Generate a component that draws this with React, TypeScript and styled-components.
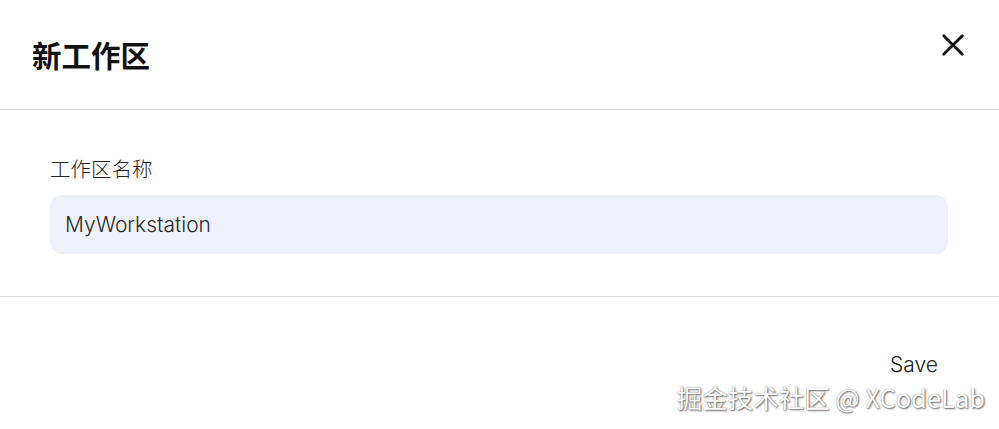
import React from 'react';
import styled, { createGlobalStyle } from 'styled-components';

const GlobalStyle = createGlobalStyle`
  html, body {
    margin: 0;
    padding: 0;
    background: #ffffff;
  }
  body {
    font-family: 'Inter', 'Noto Sans CJK SC', sans-serif;
    color: #1f1f1f;
  }
`;

const Dialog = styled.div`
  position: relative;
  width: 999px;
  height: 429px;
  background: #ffffff;
  overflow: hidden;
`;

const Header = styled.header`
  height: 110px;
  display: flex;
  align-items: center;
  justify-content: space-between;
  padding: 0 31px 0 32px;
  box-sizing: border-box;
  border-bottom: 1px solid #d9d9d9;
`;

const Title = styled.h2`
  margin: 0 0 2px;
  font-family: 'Noto Sans CJK SC', sans-serif;
  font-size: 29.5px;
  font-weight: 700;
  color: #111111;
`;

const CloseButton = styled.button`
  border: 0;
  background: none;
  padding: 0;
  margin-bottom: 19px;
  width: 30px;
  height: 30px;
  display: flex;
  align-items: center;
  justify-content: center;
  cursor: pointer;
`;

const Body = styled.div`
  height: 187px;
  padding: 43px 51px 0 50px;
  box-sizing: border-box;
  border-bottom: 1px solid #d9d9d9;
`;

const Label = styled.label`
  display: block;
  font-family: 'Noto Sans CJK SC', sans-serif;
  font-size: 20.5px;
  font-weight: 300;
  color: #222222;
  line-height: 30px;
  margin-bottom: 12px;
`;

const Input = styled.input`
  display: block;
  width: 100%;
  height: 59px;
  box-sizing: border-box;
  border: 0;
  outline: none;
  border-radius: 12px;
  background: #eef1f8;
  padding: 0 15px;
  font-family: 'Inter', sans-serif;
  font-size: 21px;
  font-weight: 300;
  color: #2a2a2a;
`;

const Footer = styled.div`
  display: flex;
  justify-content: flex-end;
  padding: 55px 61px 0 0;
`;

const SaveButton = styled.button`
  border: 0;
  background: none;
  padding: 0;
  font-family: 'Inter', sans-serif;
  font-size: 21px;
  font-weight: 300;
  color: #222222;
  cursor: pointer;
`;

const Watermark = styled.div`
  position: absolute;
  right: 14px;
  bottom: 14px;
  font-family: 'Noto Sans CJK SC', sans-serif;
  font-size: 25.5px;
  color: #ffffff;
  text-shadow: 1px 1px 2px rgba(0, 0, 0, 0.6), 0 0 1px rgba(0, 0, 0, 0.5);
  white-space: nowrap;
`;

export default function App() {
  return (
    <>
      <GlobalStyle />
      <Dialog>
        <Header>
          <Title>新工作区</Title>
          <CloseButton aria-label="close">
            <svg width="28" height="28" viewBox="0 0 24 24" fill="none" stroke="#111" strokeWidth="2.4" strokeLinecap="round">
              <path d="M4 4L20 20M20 4L4 20" />
            </svg>
          </CloseButton>
        </Header>
        <Body>
          <Label>工作区名称</Label>
          <Input defaultValue="MyWorkstation" />
        </Body>
        <Footer>
          <SaveButton>Save</SaveButton>
        </Footer>
        <Watermark>掘金技术社区 @ XCodeLab</Watermark>
      </Dialog>
    </>
  );
}
